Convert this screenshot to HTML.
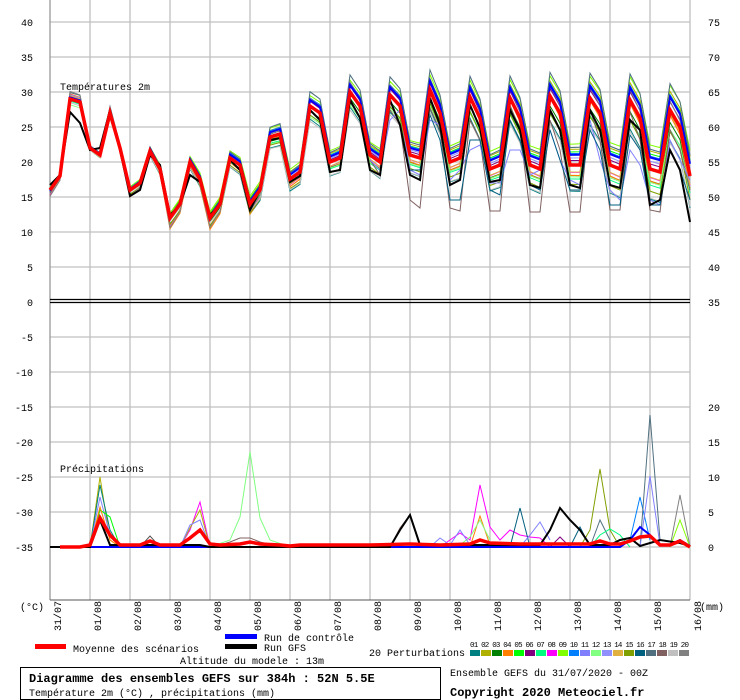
<!DOCTYPE html>
<html><head><meta charset="utf-8"><style>
body{margin:0;background:#fff;width:740px;height:700px;overflow:hidden}
svg{display:block}
text{font-family:"Liberation Mono","DejaVu Sans Mono",monospace;font-size:10px;fill:#000}
</style></head><body>
<svg width="740" height="700" viewBox="0 0 740 700" xmlns="http://www.w3.org/2000/svg">
<defs>
<polyline id="t" fill="none" points="50,190 60,176 70,99 80,102 90,148 100,155 110,113 120,148 130,190 140,183 150,151 160,169 170,218 180,204 190,162 200,179 210,218 220,204 230,158 240,165 250,204 260,190 270,137 280,134 290,179 300,172 310,106 320,113 330,162 340,158 350,92 360,106 370,155 380,162 390,95 400,106 410,155 420,158 430,90 440,113 450,162 460,158 470,97 480,118 490,169 500,165 510,98 520,118 530,165 540,169 550,96 560,113 570,165 580,165 590,98 600,113 610,165 620,169 630,100 640,118 650,169 660,172 670,110 680,127 690,176"/>
</defs>
<g stroke="#c0c0c0" stroke-width="1.3">
<line x1="50" y1="22" x2="690" y2="22"/><line x1="50" y1="57" x2="690" y2="57"/><line x1="50" y1="92" x2="690" y2="92"/><line x1="50" y1="127" x2="690" y2="127"/><line x1="50" y1="162" x2="690" y2="162"/><line x1="50" y1="197" x2="690" y2="197"/><line x1="50" y1="232" x2="690" y2="232"/><line x1="50" y1="267" x2="690" y2="267"/><line x1="50" y1="337" x2="690" y2="337"/><line x1="50" y1="372" x2="690" y2="372"/><line x1="50" y1="407" x2="690" y2="407"/><line x1="50" y1="442" x2="690" y2="442"/><line x1="50" y1="477" x2="690" y2="477"/><line x1="50" y1="512" x2="690" y2="512"/><line x1="50" y1="547" x2="690" y2="547"/>
<line x1="90" y1="0" x2="90" y2="600"/><line x1="130" y1="0" x2="130" y2="600"/><line x1="170" y1="0" x2="170" y2="600"/><line x1="210" y1="0" x2="210" y2="600"/><line x1="250" y1="0" x2="250" y2="600"/><line x1="290" y1="0" x2="290" y2="600"/><line x1="330" y1="0" x2="330" y2="600"/><line x1="370" y1="0" x2="370" y2="600"/><line x1="410" y1="0" x2="410" y2="600"/><line x1="450" y1="0" x2="450" y2="600"/><line x1="490" y1="0" x2="490" y2="600"/><line x1="530" y1="0" x2="530" y2="600"/><line x1="570" y1="0" x2="570" y2="600"/><line x1="610" y1="0" x2="610" y2="600"/><line x1="650" y1="0" x2="650" y2="600"/><line x1="690" y1="0" x2="690" y2="600"/>
</g>
<line x1="50" y1="0" x2="50" y2="600" stroke="#999" stroke-width="1.3"/>
<line x1="50" y1="600" x2="690" y2="600" stroke="#555" stroke-width="1"/>
<line x1="50" y1="299.5" x2="690" y2="299.5" stroke="#000" stroke-width="1.3"/>
<line x1="50" y1="302.5" x2="690" y2="302.5" stroke="#000" stroke-width="1.3"/>
<g stroke-width="1" fill="none">
<use href="#t" stroke="#008080" transform="matrix(1,0.05,0,1,0,-2.5)"/>
<use href="#t" stroke="#b0b000" transform="matrix(1,-0.03,0,1,0,1.5)"/>
<use href="#t" stroke="#008000" transform="matrix(1,0.02,0,1,0,-1)"/>
<use href="#t" stroke="#ff8000" transform="matrix(1,0.015,0,1.12,0,-18)"/>
<use href="#t" stroke="#00ff00" transform="matrix(1,-0.025,0,1,0,1.2)"/>
<use href="#t" stroke="#800080" transform="matrix(1,-0.01,0,1.05,0,-7)"/>
<use href="#t" stroke="#00ff80" transform="matrix(1,0.03,0,0.95,0,5)"/>
<use href="#t" stroke="#ff00ff" transform="matrix(1,0.01,0,1.1,0,-15)"/>
<use href="#t" stroke="#80ff00" transform="matrix(1,-0.04,0,1,0,2)"/>
<use href="#t" stroke="#0080ff" transform="matrix(1,-0.02,0,1.03,0,-5)"/>
<use href="#t" stroke="#80ff80" transform="matrix(1,0.025,0,0.9,0,14)"/>
<use href="#t" stroke="#9090ff" transform="matrix(1,-0.015,0,1.07,0,-10)"/>
<use href="#t" stroke="#e0b040" transform="matrix(1,0.01,0,1.08,0,-12)"/>
<use href="#t" stroke="#80a000" transform="matrix(1,0.035,0,1.02,0,-4)"/>
<use href="#t" stroke="#507080" transform="matrix(1,-0.035,0,1.1,0,-14)"/>
<use href="#t" stroke="#c0c0c0" transform="matrix(1,0.05,0,0.95,0,5)"/>
<use href="#t" stroke="#808080" transform="matrix(1,-0.005,0,1.15,0,-22)"/>
<polyline stroke="#806060" points="370,160 380,175 390,110 400,125 410,200 420,208 430,108 440,130 450,208 460,211 470,120 480,140 490,211 500,211 510,105 520,130 530,212 540,212 550,120 560,150 570,212 580,212 590,110 600,140 610,210 620,210 630,112 640,140 650,210 660,212 670,130 680,150 690,190"/>
<polyline stroke="#8080ff" points="370,160 380,170 390,120 400,110 410,170 420,175 430,120 440,125 450,180 460,170 470,150 480,145 490,183 500,183 510,150 520,150 530,175 540,170 550,130 560,160 570,180 580,185 590,120 600,160 610,190 620,200 630,150 640,165 650,200 660,205 670,140 680,160 690,180"/>
<polyline stroke="#006080" points="410,170 420,170 430,115 440,140 450,200 460,200 470,140 480,140 490,190 500,195 510,120 520,140 530,185 540,190 550,130 560,160 570,190 580,190 590,130 600,150 610,205 620,205 630,135 640,150 650,205 660,205 670,150 680,170 690,200"/>
<use href="#t" stroke="#0000ff" stroke-width="2" transform="matrix(1,-0.02,0,1.02,0,-2)"/>
<polyline stroke="#000" stroke-width="2" points="50,185 60,175 70,112 80,123 90,150 100,148 110,110 120,150 130,196 140,190 150,155 160,165 170,215 180,205 190,175 200,182 210,215 220,205 230,160 240,170 250,210 260,190 270,140 280,138 290,182 300,176 310,110 320,120 330,172 340,170 350,100 360,118 370,170 380,175 390,100 400,125 410,175 420,180 430,98 440,125 450,185 460,180 470,105 480,128 490,182 500,180 510,110 520,130 530,185 540,188 550,110 560,130 570,185 580,188 590,110 600,130 610,185 620,188 630,120 640,130 650,205 660,200 670,150 680,170 690,222"/>
<use href="#t" stroke="#ff0000" stroke-width="3.5"/>
</g>
<g fill="none" stroke-width="1">
<polyline stroke="#b0b000" points="90,547 100,477 110,540 120,547"/>
<polyline stroke="#008080" points="90,547 100,485 110,530 120,547"/>
<polyline stroke="#8080ff" points="90,547 100,497 110,535 120,547"/>
<polyline stroke="#00ff00" points="90,547 100,510 110,517 120,547"/>
<polyline stroke="#ff8000" points="90,547 100,507 110,540 120,547"/>
<polyline stroke="#555" points="140,547 150,536 160,547"/>
<polyline stroke="#ff00ff" points="180,547 190,530 200,502 210,547"/>
<polyline stroke="#b0b000" points="180,547 190,528 200,510 210,547"/>
<polyline stroke="#8080ff" points="180,547 190,525 200,520 210,547"/>
<polyline stroke="#80ff80" points="210,547 230,540 240,517 250,452 260,518 270,540 290,547"/>
<polyline stroke="#806060" points="220,545 230,542 240,538 250,538 260,542 280,547"/>
<polyline stroke="#806060" points="390,547 400,528 410,515 420,547"/>
<polyline stroke="#ff00ff" points="440,547 450,540 460,533 470,540 480,485 490,527 500,540 510,530 520,535 530,537 540,538 550,547"/>
<polyline stroke="#ff8000" points="470,547 480,516 490,545"/>
<polyline stroke="#80ff80" points="460,545 470,537 480,520 490,540"/>
<polyline stroke="#8080ff" points="430,547 440,538 450,545 460,530 470,545"/>
<polyline stroke="#006080" points="510,547 520,508 530,547"/>
<polyline stroke="#8080ff" points="520,547 530,535 540,522 550,540"/>
<polyline stroke="#800080" points="550,547 560,537 570,547"/>
<polyline stroke="#006080" points="570,547 580,527 590,547"/>
<polyline stroke="#80a000" points="580,547 590,530 600,469 610,530 620,547"/>
<polyline stroke="#507080" points="590,547 600,520 610,540"/>
<polyline stroke="#00ff80" points="590,547 600,535 610,529 620,535 630,547"/>
<polyline stroke="#0080ff" points="620,547 630,540 640,497 650,540"/>
<polyline stroke="#507080" points="640,547 650,415 660,540"/>
<polyline stroke="#8080ff" points="640,547 650,476 660,545"/>
<polyline stroke="#808080" points="670,547 680,495 690,547"/>
<polyline stroke="#80ff00" points="670,547 680,520 690,547"/>
<polyline stroke="#0000ff" stroke-width="2" points="50,547 200,547 210,547 230,547 620,547 630,540 640,527 650,535 660,545 670,545 680,540 690,546"/>
<polyline stroke="#000" stroke-width="2" points="50,547 90,547 100,520 110,545 200,545 210,547 390,547 400,530 410,515 420,545 540,545 550,530 560,508 570,520 580,530 590,545 610,545 620,540 630,538 640,546 660,540 680,543 690,546"/>
<polyline stroke="#ff0000" stroke-width="3.5" points="60,547 80,547 90,545 100,518 110,535 120,545 140,545 150,541 160,545 170,545 180,545 190,538 200,530 210,544 220,545 240,544 250,542 260,544 280,545 290,546 300,545 370,545 410,544 440,545 470,544 480,540 490,543 520,544 560,544 590,544 600,541 610,544 620,544 630,541 640,537 650,536 660,545 670,545 680,541 690,547"/>
</g>
<g text-anchor="end" style="font-size:11px">
<text x="33" y="26">40</text><text x="33" y="61">35</text><text x="33" y="96">30</text><text x="33" y="131">25</text><text x="33" y="166">20</text><text x="33" y="201">15</text><text x="33" y="236">10</text><text x="33" y="271">5</text><text x="33" y="306">0</text><text x="33" y="341">-5</text><text x="33" y="376">-10</text><text x="33" y="411">-15</text><text x="33" y="446">-20</text><text x="33" y="481">-25</text><text x="33" y="516">-30</text><text x="33" y="551">-35</text>
</g>
<g style="font-size:11px">
<text x="708" y="26">75</text><text x="708" y="61">70</text><text x="708" y="96">65</text><text x="708" y="131">60</text><text x="708" y="166">55</text><text x="708" y="201">50</text><text x="708" y="236">45</text><text x="708" y="271">40</text><text x="708" y="306">35</text><text x="708" y="411">20</text><text x="708" y="446">15</text><text x="708" y="481">10</text><text x="708" y="516">5</text><text x="708" y="551">0</text>
</g>
<text x="60" y="90">Températures 2m</text>
<text x="60" y="472">Précipitations</text>
<text x="20" y="610">(°C)</text>
<text x="700" y="610">(mm)</text>
<g>
<text transform="translate(61,631) rotate(-90)">31/07</text>
<text transform="translate(101,631) rotate(-90)">01/08</text>
<text transform="translate(141,631) rotate(-90)">02/08</text>
<text transform="translate(181,631) rotate(-90)">03/08</text>
<text transform="translate(221,631) rotate(-90)">04/08</text>
<text transform="translate(261,631) rotate(-90)">05/08</text>
<text transform="translate(301,631) rotate(-90)">06/08</text>
<text transform="translate(341,631) rotate(-90)">07/08</text>
<text transform="translate(381,631) rotate(-90)">08/08</text>
<text transform="translate(421,631) rotate(-90)">09/08</text>
<text transform="translate(461,631) rotate(-90)">10/08</text>
<text transform="translate(501,631) rotate(-90)">11/08</text>
<text transform="translate(541,631) rotate(-90)">12/08</text>
<text transform="translate(581,631) rotate(-90)">13/08</text>
<text transform="translate(621,631) rotate(-90)">14/08</text>
<text transform="translate(661,631) rotate(-90)">15/08</text>
<text transform="translate(701,631) rotate(-90)">16/08</text>
</g>
<rect x="35" y="644" width="31" height="5" fill="#f00"/>
<text x="73" y="652">Moyenne des scénarios</text>
<rect x="225" y="634" width="32" height="5" fill="#00f"/>
<text x="264" y="641">Run de contrôle</text>
<rect x="225" y="644" width="32" height="5" fill="#000"/>
<text x="264" y="651">Run GFS</text>
<text x="369" y="656">20 Perturbations</text>
<text x="180" y="664">Altitude du modele : 13m</text>
<text x="470" y="647" style="font-size:7.5px" textLength="219">01 02 03 04 05 06 07 08 09 10 11 12 13 14 15 16 17 18 19 20</text>
<g>
<rect x="470" y="650" width="10" height="6" fill="#008080"/><rect x="481" y="650" width="10" height="6" fill="#b0b000"/><rect x="492" y="650" width="10" height="6" fill="#008000"/><rect x="503" y="650" width="10" height="6" fill="#ff8000"/><rect x="514" y="650" width="10" height="6" fill="#00ff00"/><rect x="525" y="650" width="10" height="6" fill="#800080"/><rect x="536" y="650" width="10" height="6" fill="#00ff80"/><rect x="547" y="650" width="10" height="6" fill="#ff00ff"/><rect x="558" y="650" width="10" height="6" fill="#80ff00"/><rect x="569" y="650" width="10" height="6" fill="#0080ff"/><rect x="580" y="650" width="10" height="6" fill="#8080ff"/><rect x="591" y="650" width="10" height="6" fill="#80ff80"/><rect x="602" y="650" width="10" height="6" fill="#9090ff"/><rect x="613" y="650" width="10" height="6" fill="#e0b040"/><rect x="624" y="650" width="10" height="6" fill="#80a000"/><rect x="635" y="650" width="10" height="6" fill="#006080"/><rect x="646" y="650" width="10" height="6" fill="#507080"/><rect x="657" y="650" width="10" height="6" fill="#806060"/><rect x="668" y="650" width="10" height="6" fill="#c0c0c0"/><rect x="679" y="650" width="10" height="6" fill="#808080"/>
</g>
<rect x="20.5" y="667.5" width="420" height="32" fill="none" stroke="#000" stroke-width="1"/>
<text x="29" y="682" style="font-weight:bold;font-size:12px">Diagramme des ensembles GEFS sur 384h : 52N 5.5E</text>
<text x="29" y="696">Température 2m (°C) , précipitations (mm)</text>
<text x="450" y="676">Ensemble GEFS du 31/07/2020 - 00Z</text>
<text x="450" y="696" style="font-weight:bold;font-size:12px">Copyright 2020 Meteociel.fr</text>
</svg>
</body></html>
